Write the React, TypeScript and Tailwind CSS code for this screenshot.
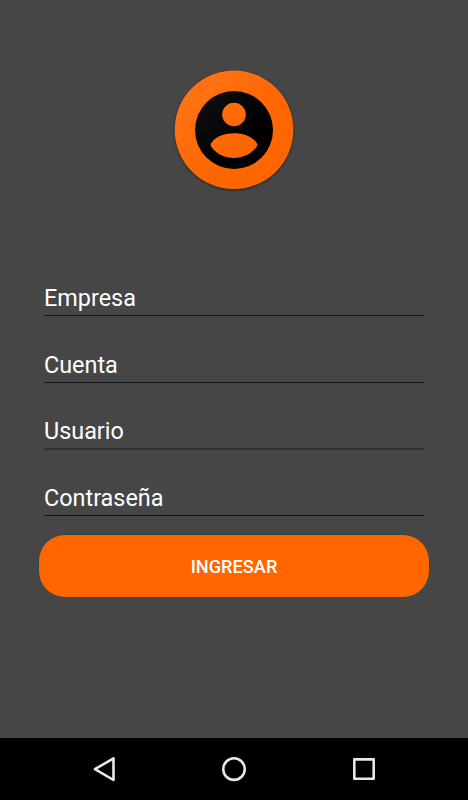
const fields = [
  { label: "Empresa", box: "h-[38px]", line: "h-px bg-[#161616]" },
  { label: "Cuenta", box: "h-[66px]", line: "h-px bg-[#161616]" },
  { label: "Usuario", box: "h-[65px]", line: "h-0.5 bg-[#303030]" },
  { label: "Contraseña", box: "h-[65px]", line: "h-px bg-[#111111]" },
];

function AccountLogo() {
  return (
    <svg className="mt-[66px] block h-32 w-32 shrink-0" viewBox="170 66 128 128" aria-hidden="true">
      <defs>
        <linearGradient id="orange" x1="0" y1="0" x2="1" y2="1">
          <stop offset="0" stopColor="#ff771a" />
          <stop offset="0.6" stopColor="#ff6600" />
        </linearGradient>
        <linearGradient id="ink" x1="0" y1="0" x2="1" y2="1">
          <stop offset="0" stopColor="#111111" />
          <stop offset="0.65" stopColor="#000000" />
        </linearGradient>
        <filter id="shade" x="-10%" y="-10%" width="120%" height="120%">
          <feGaussianBlur stdDeviation="1" />
        </filter>
      </defs>
      <circle cx="234" cy="130.8" r="59.5" fill="#151515" opacity="0.65" filter="url(#shade)" />
      <circle cx="234" cy="129.8" r="59.3" fill="url(#orange)" />
      <path
        fill="url(#ink)"
        fillRule="evenodd"
        d="M234 91a39 39 0 1 0 0 78a39 39 0 1 0 0-78ZM234 102.700a11.800 11.800 0 1 1 0 23.600a11.800 11.800 0 1 1 0-23.600ZM211.300 143C216 136 225.500 133.300 234 133.300S252 136 256.700 143Q258 144.700 257 146.200C252 153.800 243.500 158 234 158S216 153.800 211 146.200Q210 144.700 211.300 143Z"
      />
    </svg>
  );
}

export default function App() {
  return (
    <div className="flex h-[800px] w-[468px] flex-col overflow-hidden bg-[#464646] font-[Roboto,sans-serif] text-white">
      <main className="flex flex-1 flex-col items-center">
        <AccountLogo />
        <form className="mt-[83px] flex w-[380px] flex-col">
          {fields.map(({ label, box, line }) => (
            <div key={label}>
              <div className={`flex items-end pb-[3px] text-[23.4px] leading-[28px] ${box}`}>{label}</div>
              <div className={line} />
            </div>
          ))}
        </form>
        <button
          type="button"
          className="mt-[18px] flex h-16 w-[392px] items-center justify-center rounded-[27px] border border-[#2b484b] bg-[#ff6600] pt-0.5 text-[18.2px] font-medium"
        >
          INGRESAR
        </button>
      </main>
      <nav className="flex h-[62px] items-center justify-between bg-black px-[88px]">
        <svg className="h-8 w-8" viewBox="88 753 32 32" fill="none" stroke="#e8e8e8" strokeWidth="2.6" strokeLinejoin="round">
          <path d="M94.9 769.2L113.5 758.4V780Z" />
        </svg>
        <svg className="h-8 w-8" viewBox="218 753 32 32" fill="none" stroke="#e8e8e8" strokeWidth="2.6">
          <circle cx="234" cy="769.1" r="10.8" />
        </svg>
        <svg className="h-8 w-8" viewBox="348 753 32 32" fill="none" stroke="#e8e8e8" strokeWidth="2.6" strokeLinejoin="round">
          <rect x="354.3" y="759.4" width="19.4" height="19.4" />
        </svg>
      </nav>
    </div>
  );
}
